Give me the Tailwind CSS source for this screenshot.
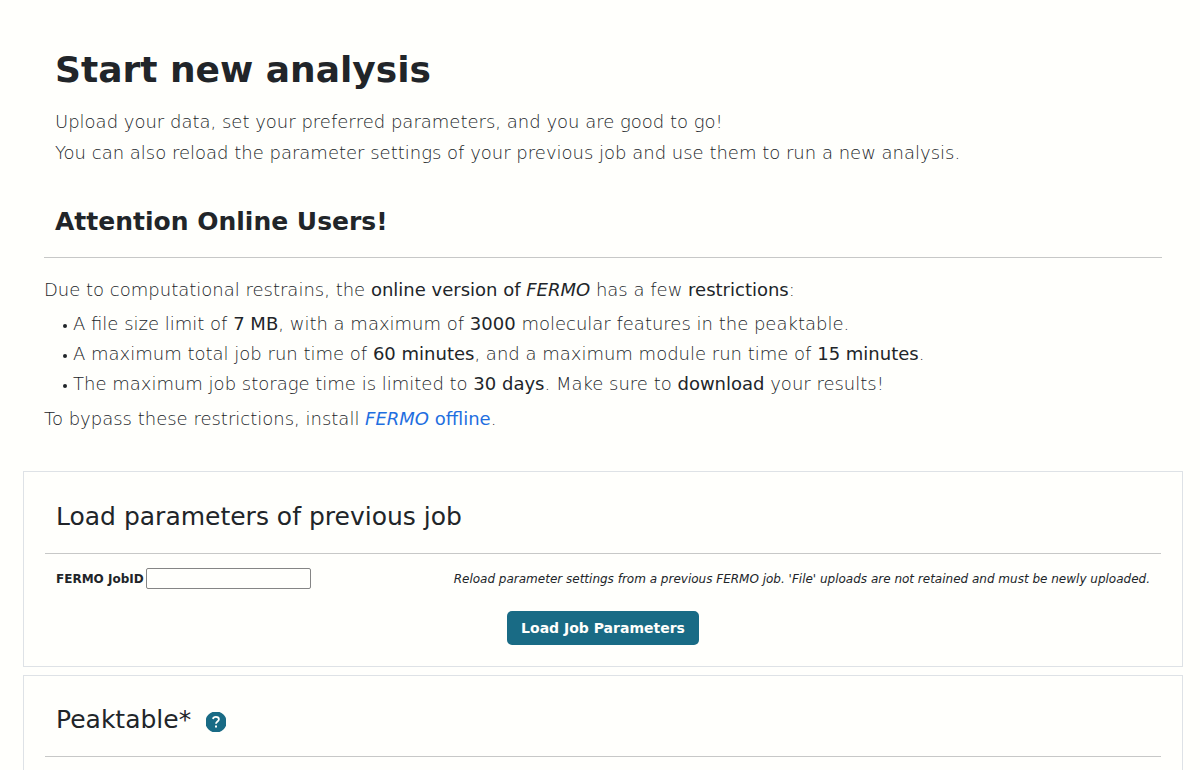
<!DOCTYPE html>
<html lang="en">
<head>
<meta charset="utf-8">
<meta name="viewport" content="width=device-width, initial-scale=1">
<title>Start new analysis</title>
<script src="https://cdn.jsdelivr.net/npm/@tailwindcss/browser@4"></script>
</head>
<body class="bg-[#fffffc] font-['DejaVu_Sans',sans-serif] text-[#212529]">
<main class="pt-12 pr-[17px] pl-[23px]">
  <header class="px-8">
    <h1 class="text-[36px] leading-[44px] font-bold">Start new analysis</h1>
    <p class="mt-[14px] text-[18px] leading-[31px] font-extralight">Upload your data, set your preferred parameters, and you are good to go!<br>You can also reload the parameter settings of your previous job and use them to run a new analysis.</p>
  </header>

  <section class="mt-[38px] px-[21px]">
    <h2 class="px-[11px] text-[25px] leading-[32px] font-bold">Attention Online Users!</h2>
    <hr class="mt-[19px] border-[#c7c8c7]">
    <div class="mt-4 text-[18px] font-extralight">
      <p class="leading-[31px]">Due to computational restrains, the <b class="font-normal">online version of <i>FERMO</i></b> has a few <b class="font-normal">restrictions</b>:</p>
      <ul class="my-1 pl-[19px] leading-[30px]">
        <li class="flex items-center gap-[6px]"><span class="mt-1 size-1 rounded-full bg-[#212529]"></span><p>A file size limit of <b class="font-normal">7 MB</b>, with a maximum of <b class="font-normal">3000</b> molecular features in the peaktable.</p></li>
        <li class="flex items-center gap-[6px]"><span class="mt-1 size-1 rounded-full bg-[#212529]"></span><p>A maximum total job run time of <b class="font-normal">60 minutes</b>, and a maximum module run time of <b class="font-normal">15 minutes</b>.</p></li>
        <li class="flex items-center gap-[6px]"><span class="mt-1 size-1 rounded-full bg-[#212529]"></span><p>The maximum job storage time is limited to <b class="font-normal">30 days</b>. Make sure to <b class="font-normal">download</b> your results!</p></li>
      </ul>
      <p class="leading-[31px]">To bypass these restrictions, install <a href="#" class="font-normal text-[#1f6fe0]"><i>FERMO</i> offline</a>.</p>
    </div>
  </section>

  <form class="mt-[37px]">
    <section class="border border-[#dee2e6] px-[21px] pt-[29px] pb-[21px]">
      <h2 class="px-[11px] text-[25px] leading-[32px]">Load parameters of previous job</h2>
      <hr class="mt-5 border-[#c7c8c7]">
      <div class="mt-[14px] flex items-center justify-between px-[11px] text-[12px]">
        <div class="flex items-center gap-0.5">
          <label for="job" class="font-bold">FERMO JobID</label>
          <input id="job" type="text" class="h-[21px] w-[165px] rounded-[2px] border border-[#858585] bg-transparent px-1">
        </div>
        <p class="italic">Reload parameter settings from a previous FERMO job. 'File' uploads are not retained and must be newly uploaded.</p>
      </div>
      <div class="mt-[22px] flex justify-center">
        <button type="submit" class="h-[34px] rounded-[5px] bg-[#196b85] px-[14px] text-[14px] font-bold text-[#fffffc]">Load Job Parameters</button>
      </div>
    </section>

    <section class="mt-2 border border-[#dee2e6] px-[21px] pt-7 pb-12">
      <div class="flex items-center gap-[14px] px-[11px]">
        <h2 class="text-[25px] leading-[32px]">Peaktable*</h2>
        <button type="button" aria-label="Help" class="mt-1">
          <svg class="size-[22px]" viewBox="0 0 22 22" fill="none"><path d="M7.500 1h7C17 1.700 20.300 5 21 7.500v7C20.300 17 17 20.300 14.500 21h-7C5 20.300 1.700 17 1 14.500v-7C1.700 5 5 1.700 7.500 1z" fill="#196b85"/><path d="M8 8C8.200 6.600 9.400 5.900 10.900 5.900c1.800 0 3 .9 3 2.400 0 2.200-2.900 2.200-2.900 4.500" stroke="#fffffc" stroke-width="1.800"/><path d="M10 14.500h2v2h-2z" fill="#fffffc"/></svg>
        </button>
      </div>
      <hr class="mt-5 border-[#c7c8c7]">
    </section>
  </form>
</main>
</body>
</html>
